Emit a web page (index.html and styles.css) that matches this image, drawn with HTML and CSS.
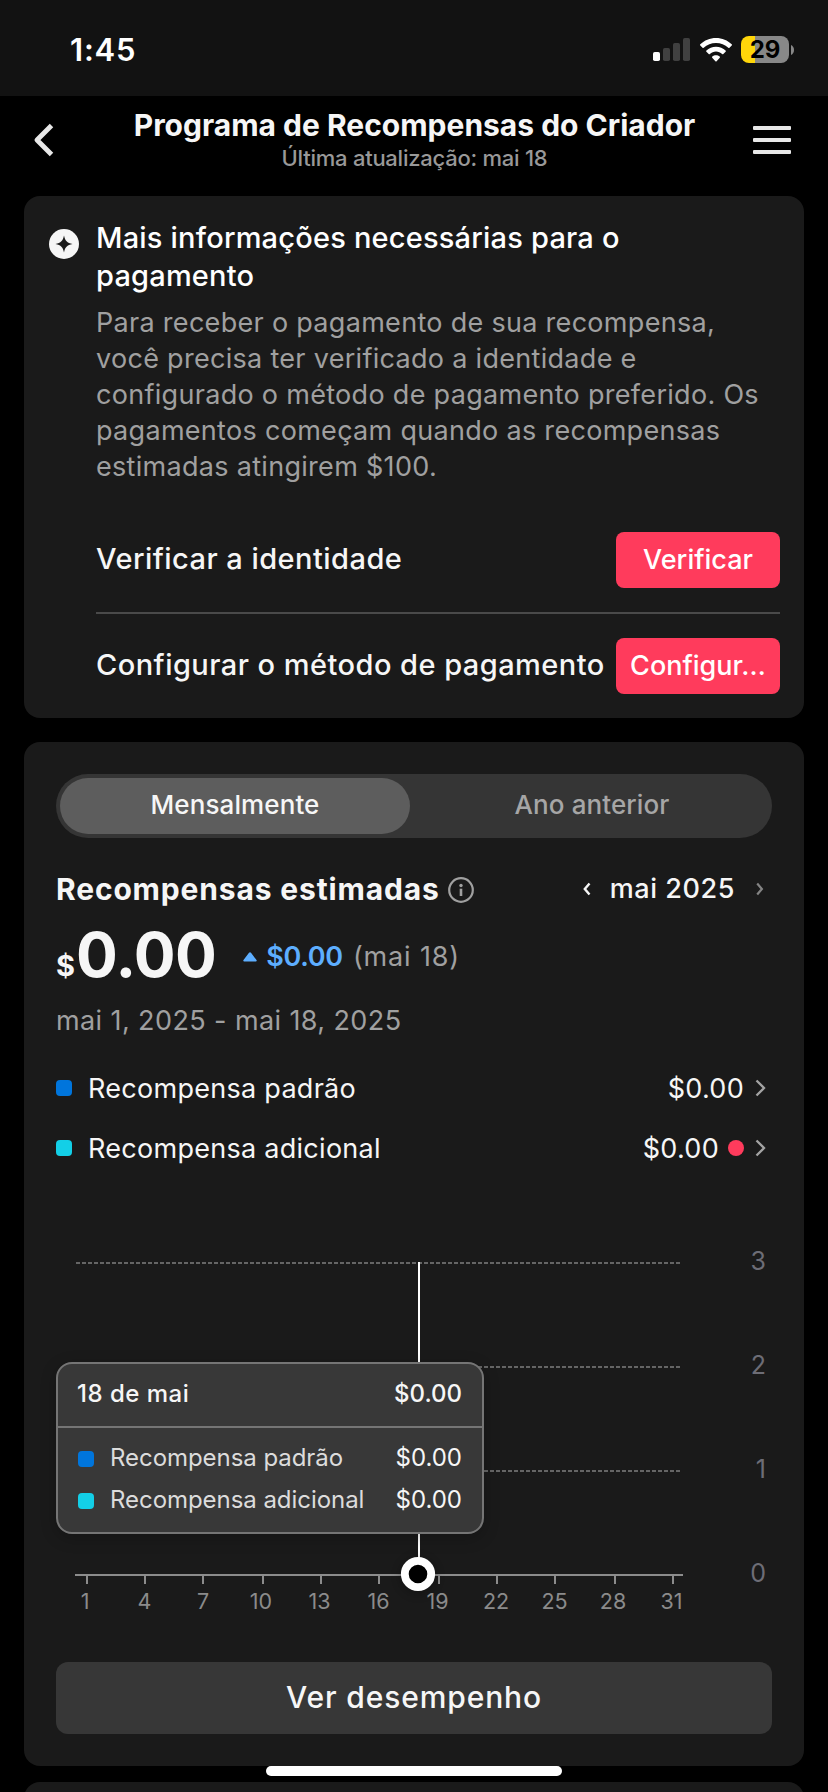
FILE: index.html
```html
<!DOCTYPE html>
<html lang="pt-BR">
<head>
<meta charset="utf-8">
<title>Programa de Recompensas do Criador</title>
<link rel="stylesheet" href="styles.css">
</head>
<body>
<div class="screen">
  <div class="status">
    <span class="clock">1:45</span>
    <svg class="signal" width="38" height="24" viewBox="0 0 38 24">
      <rect x="0" y="14" width="7" height="9" rx="1.8" fill="#fff"/>
      <rect x="10" y="10" width="7" height="13" rx="1.8" fill="#404040"/>
      <rect x="20" y="5" width="7" height="18" rx="1.8" fill="#404040"/>
      <rect x="30" y="0" width="7" height="23" rx="1.8" fill="#404040"/>
    </svg>
    <svg class="wifi" width="32" height="24" viewBox="0 0 32 24" fill="#fff">
      <path d="M16 0C9.9 0 4.300 2.300 0.300 6.300c-.4.400-.4.900 0 1.300l2.200 2.200c.3.300.8.300 1.200 0C7 6.700 11.300 4.900 16 4.900s9 1.800 12.300 4.900c.4.300.9.300 1.200 0l2.200-2.200c.4-.4.4-.9 0-1.300C27.700 2.300 22.100 0 16 0z"/>
      <path d="M16 8.700c-3.700 0-7.100 1.400-9.600 3.800-.4.400-.4.900 0 1.200l2.300 2.300c.3.300.8.300 1.200 0 1.600-1.500 3.800-2.400 6.100-2.400s4.500.9 6.100 2.400c.4.300.9.300 1.200 0l2.300-2.300c.4-.3.400-.8 0-1.200-2.500-2.400-5.900-3.800-9.600-3.800z"/>
      <path d="M16 17.200c-1.400 0-2.700.5-3.700 1.300-.4.300-.4.900-.1 1.200l3.200 3.500c.3.400.9.400 1.200 0l3.200-3.500c.3-.3.300-.9-.1-1.200-1-.8-2.300-1.300-3.700-1.300z"/>
    </svg>
    <div class="battery"><span class="level">29</span></div>
    <svg class="nub" width="3" height="10" viewBox="0 0 3 10"><path d="M0 0C1.800.8 3 2.700 3 5S1.800 9.200 0 10z" fill="#888"/></svg>
  </div>

  <header class="nav">
    <svg class="back" width="24" height="40" viewBox="0 0 24 40"><path d="M19.500 5.500 5 20 19.500 34.500" fill="none" stroke="#e8e8e8" stroke-width="4.900" stroke-linejoin="round" stroke-linecap="butt"/></svg>
    <div class="titles">
      <h1 class="title">Programa de Recompensas do Criador</h1>
      <div class="updated">Última atualização: mai 18</div>
    </div>
    <div class="menu"><span class="bar"></span><span class="bar"></span><span class="bar"></span></div>
  </header>

  <main class="cards">
    <section class="card notice">
      <svg class="spark" width="30" height="30" viewBox="0 0 30 30"><circle cx="15" cy="15" r="15" fill="#f6f6f6"/><path d="M15 6.500c1.100 5.400 3 7.400 8.500 8.500-5.500 1.100-7.400 3.100-8.500 8.500-1.100-5.400-3-7.400-8.500-8.500 5.500-1.100 7.400-3.100 8.500-8.500z" fill="#1a1a1a"/></svg>
      <div class="notice-body">
        <h2 class="notice-title">Mais informações necessárias para o<br>pagamento</h2>
        <p class="notice-text">Para receber o pagamento de sua recompensa,<br>você precisa ter verificado a identidade e<br>configurado o método de pagamento preferido. Os<br>pagamentos começam quando as recompensas<br>estimadas atingirem $100.</p>
        <div class="task"><span class="task-name">Verificar a identidade</span><span class="cta">Verificar</span></div>
        <div class="task"><span class="task-name">Configurar o método de pagamento</span><span class="cta">Configur…</span></div>
      </div>
    </section>

    <section class="card rewards">
      <div class="tabs"><span class="tab active">Mensalmente</span><span class="tab">Ano anterior</span></div>

      <div class="period">
        <h2 class="period-title">Recompensas estimadas</h2>
        <svg class="info" width="26" height="26" viewBox="0 0 26 26"><circle cx="13" cy="13" r="11.800" fill="none" stroke="#a0a0a0" stroke-width="2.200"/><circle cx="13" cy="8.500" r="1.700" fill="#a0a0a0"/><rect x="11.700" y="11.700" width="2.600" height="7.300" fill="#a0a0a0"/></svg>
        <svg class="prev" width="8" height="14" viewBox="0 0 8 14"><path d="M6.500 1.500 1.800 7l4.700 5.500" fill="none" stroke="#f6f6f6" stroke-width="2.400"/></svg>
        <span class="month">mai 2025</span>
        <svg class="next" width="8" height="14" viewBox="0 0 8 14"><path d="M1.200 1.500 5.900 7l-4.700 5.500" fill="none" stroke="#848484" stroke-width="2.200"/></svg>
      </div>

      <div class="amount">
        <span class="currency">$</span><span class="total">0.00</span>
        <svg class="up" width="14" height="10" viewBox="0 0 14 10"><path d="M6 .8c.5-.7 1.500-.7 2 0l5.500 7.300c.5.700.1 1.400-.7 1.400H1.200c-.8 0-1.200-.7-.7-1.400z" fill="#5daeff"/></svg>
        <span class="delta">$0.00</span><span class="asof">(mai 18)</span>
      </div>
      <div class="range">mai 1, 2025 - mai 18, 2025</div>

      <div class="line"><i class="swatch blue"></i><span class="line-name">Recompensa padrão</span><span class="line-value">$0.00</span>
        <svg class="go" width="11" height="18" viewBox="0 0 11 18"><path d="M1.500 1.500 9 9l-7.500 7.500" fill="none" stroke="#a3a3a3" stroke-width="2.300"/></svg></div>
      <div class="line"><i class="swatch cyan"></i><span class="line-name">Recompensa adicional</span><span class="line-value">$0.00</span><i class="alert"></i>
        <svg class="go" width="11" height="18" viewBox="0 0 11 18"><path d="M1.500 1.500 9 9l-7.500 7.500" fill="none" stroke="#a3a3a3" stroke-width="2.300"/></svg></div>

      <div class="chart">
        <svg class="plot" width="716" height="444" viewBox="0 0 716 444">
          <path class="grid" d="M20 85H624M20 189H624M20 293H624"/>
          <path class="axis" d="M19 397H627M31 397v9M89 397v9M147 397v9M207 397v9M265 397v9M323 397v9M383 397v9M441 397v9M499 397v9M559 397v9M617 397v9"/>
          <path class="cursor" d="M363 84V390"/>
          <circle class="ring-shadow" cx="362" cy="398" r="18"/>
          <circle cx="362" cy="396" r="13.200" fill="#000" stroke="#fff" stroke-width="7.800"/>
          <g class="days">
            <text x="29" y="431">1</text><text x="88.500" y="431">4</text><text x="147" y="431">7</text><text x="205" y="431">10</text><text x="263.500" y="431">13</text><text x="322.500" y="431">16</text><text x="381.500" y="431">19</text><text x="440" y="431">22</text><text x="498.500" y="431">25</text><text x="557" y="431">28</text><text x="615.500" y="431">31</text>
          </g>
          <g class="scale">
            <text x="710" y="92">3</text><text x="710" y="196">2</text><text x="710" y="300">1</text><text x="710" y="404">0</text>
          </g>
        </svg>
        <div class="tooltip">
          <div class="tip-head"><span class="tip-date">18 de mai</span><span>$0.00</span></div>
          <div class="tip-body">
            <div class="tip-row"><i class="swatch blue"></i><span class="tip-name">Recompensa padrão</span><span>$0.00</span></div>
            <div class="tip-row"><i class="swatch cyan"></i><span class="tip-name">Recompensa adicional</span><span>$0.00</span></div>
          </div>
        </div>
      </div>

      <div class="performance">Ver desempenho</div>
    </section>

    <section class="card upcoming"></section>
  </main>
  <div class="home"></div>
</div>
</body>
</html>
```
FILE: styles.css
```css
* { box-sizing: border-box; }
body { margin: 0; background: #000; }
h1, h2, p { margin: 0; }
svg { display: block; flex: none; }

.screen {
  position: relative;
  width: 828px;
  height: 1792px;
  overflow: hidden;
  background: #000;
  color: #f6f6f6;
  font-family: Inter, "Liberation Sans", sans-serif;
  white-space: nowrap;
}

/* status bar */
.status {
  display: flex;
  align-items: center;
  height: 96px;
  padding: 3px 34px 0 70px;
  background: #121212;
}
.clock { flex: 1; font-size: 31px; font-weight: 600; line-height: 40px; letter-spacing: 0.8px; color: #fff; }
.signal { margin-right: 9px; }
.wifi { margin-right: 9px; }
.battery {
  width: 48px;
  height: 27px;
  border-radius: 8px;
  background: linear-gradient(90deg, #ffd60a 14px, #888 14px);
  text-align: center;
}
.level { font-size: 24px; font-weight: 700; line-height: 27px; color: #000; }
.nub { margin-left: 2px; }

/* navigation header */
.nav {
  display: flex;
  align-items: center;
  height: 100px;
  padding: 0 37px 12px 32px;
}
.titles { flex: 1; text-align: center; padding-left: 20px; }
.title { font-size: 30px; font-weight: 700; line-height: 36px; }
.updated { font-size: 22px; font-weight: 500; line-height: 30px; letter-spacing: -0.25px; color: #989898; }
.menu { display: flex; flex-direction: column; gap: 8px; width: 38px; }
.bar { height: 4px; border-radius: 1px; background: #e8e8e8; }

/* cards */
.cards { display: flex; flex-direction: column; padding: 0 24px; }
.card { border-radius: 16px; background: #1a1a1a; }

.notice { display: flex; height: 522px; margin-bottom: 24px; padding: 23px 24px 0 25px; }
.spark { margin-top: 10px; }
.notice-body { flex: 1; padding-left: 17px; }
.notice-title { font-size: 29px; font-weight: 500; line-height: 38px; letter-spacing: 0.2px; color: #fff; }
.notice-text { margin: 10px 0 23px; font-size: 27px; line-height: 36px; letter-spacing: 0.3px; color: #a0a0a0; }
.task { display: flex; align-items: center; justify-content: space-between; height: 104px; }
.task + .task { height: 106px; border-top: 2px solid #4a4a4a; }
.task-name { padding-bottom: 3px; font-size: 29px; font-weight: 500; letter-spacing: 0.46px; }
.cta {
  width: 164px;
  height: 56px;
  border-radius: 8px;
  background: #ff3b5c;
  color: #fff;
  font-size: 27px;
  font-weight: 500;
  line-height: 56px;
  text-align: center;
}

.rewards { height: 1024px; margin-bottom: 16px; padding: 32px; }
.tabs { display: flex; height: 64px; padding: 4px; border-radius: 32px; background: #353535; }
.tab { flex: 1; padding-left: 6px; border-radius: 28px; font-size: 26px; font-weight: 500; line-height: 54px; letter-spacing: 0.1px; text-align: center; color: #a6a6a6; }
.tab.active { flex: none; width: 350px; padding-left: 0; background: #5d5d5d; color: #f6f6f6; }

.period { display: flex; align-items: center; height: 40px; margin-top: 31px; padding-right: 8px; }
.period-title { font-size: 30px; font-weight: 700; letter-spacing: 0.84px; }
.info { margin: 2px auto 0 8px; }
.month { margin: 0 21px 0 19px; padding-bottom: 1px; font-size: 27px; font-weight: 500; letter-spacing: 0.57px; }

.amount { display: flex; align-items: center; height: 60px; margin-top: 17px; }
.currency { padding-top: 18px; font-size: 29px; font-weight: 700; }
.total { margin-left: 1px; padding-bottom: 3px; font-size: 62px; font-weight: 700; letter-spacing: -0.56px; }
.up { margin: 2px 0 0 27px; }
.delta { margin-left: 9px; font-size: 27px; font-weight: 600; letter-spacing: -0.3px; color: #5daeff; }
.asof { margin-left: 10px; font-size: 27px; letter-spacing: 0.86px; color: #a0a0a0; }
.range { margin: 15px 0 17px; font-size: 27px; line-height: 40px; letter-spacing: 0.4px; color: #a0a0a0; }

.line { display: flex; align-items: center; height: 60px; padding-right: 6px; font-size: 27px; letter-spacing: 0.28px; }
.swatch { flex: none; width: 16px; height: 16px; border-radius: 4px; }
.blue { background: #0075dc; }
.cyan { background: #13cfe7; }
.line-name { flex: 1; padding-left: 16px; }
.alert { width: 16px; height: 16px; margin-left: 9px; border-radius: 50%; background: #ff3b5c; }
.go { margin-left: 11px; }

/* chart */
.chart { position: relative; height: 444px; }
.grid { fill: none; stroke: #656565; stroke-width: 2; stroke-dasharray: 4 2; }
.axis { fill: none; stroke: #8c8c8c; stroke-width: 2; }
.cursor { stroke: #fff; stroke-width: 2; }
.ring-shadow { fill: #000; opacity: 0.25; filter: blur(5px); }
.days { font-size: 21.5px; fill: #8b8b8b; text-anchor: middle; }
.scale { font-size: 25px; fill: #6d6d76; text-anchor: end; }

.tooltip {
  position: absolute;
  left: 0;
  top: 184px;
  width: 428px;
  height: 172px;
  border: 2px solid #757575;
  border-radius: 16px;
  background: #383838;
  box-shadow: 0 4px 16px rgba(0, 0, 0, 0.22);
}
.tip-head {
  display: flex;
  justify-content: space-between;
  height: 64px;
  padding: 0 20px 0 19px;
  border-bottom: 2px solid #757575;
  font-size: 24px;
  font-weight: 500;
  line-height: 60px;
}
.tip-date { letter-spacing: 0.5px; }
.tip-body { padding: 9px 20px 0; }
.tip-row { display: flex; align-items: center; height: 42px; font-size: 24px; line-height: 42px; }
.tip-row .swatch { margin-top: 2px; }
.tip-name { flex: 1; padding-left: 16px; letter-spacing: -0.05px; color: #dcdcdc; }

.performance {
  height: 72px;
  margin-top: 40px;
  border-radius: 12px;
  background: #373737;
  font-size: 30px;
  font-weight: 500;
  line-height: 70px;
  letter-spacing: 0.87px;
  text-align: center;
}

.upcoming { height: 60px; }

/* home indicator, floating above the scrolled page */
.home {
  position: absolute;
  left: 266px;
  top: 1766px;
  width: 296px;
  height: 10px;
  border-radius: 5px;
  background: #fff;
}
```
